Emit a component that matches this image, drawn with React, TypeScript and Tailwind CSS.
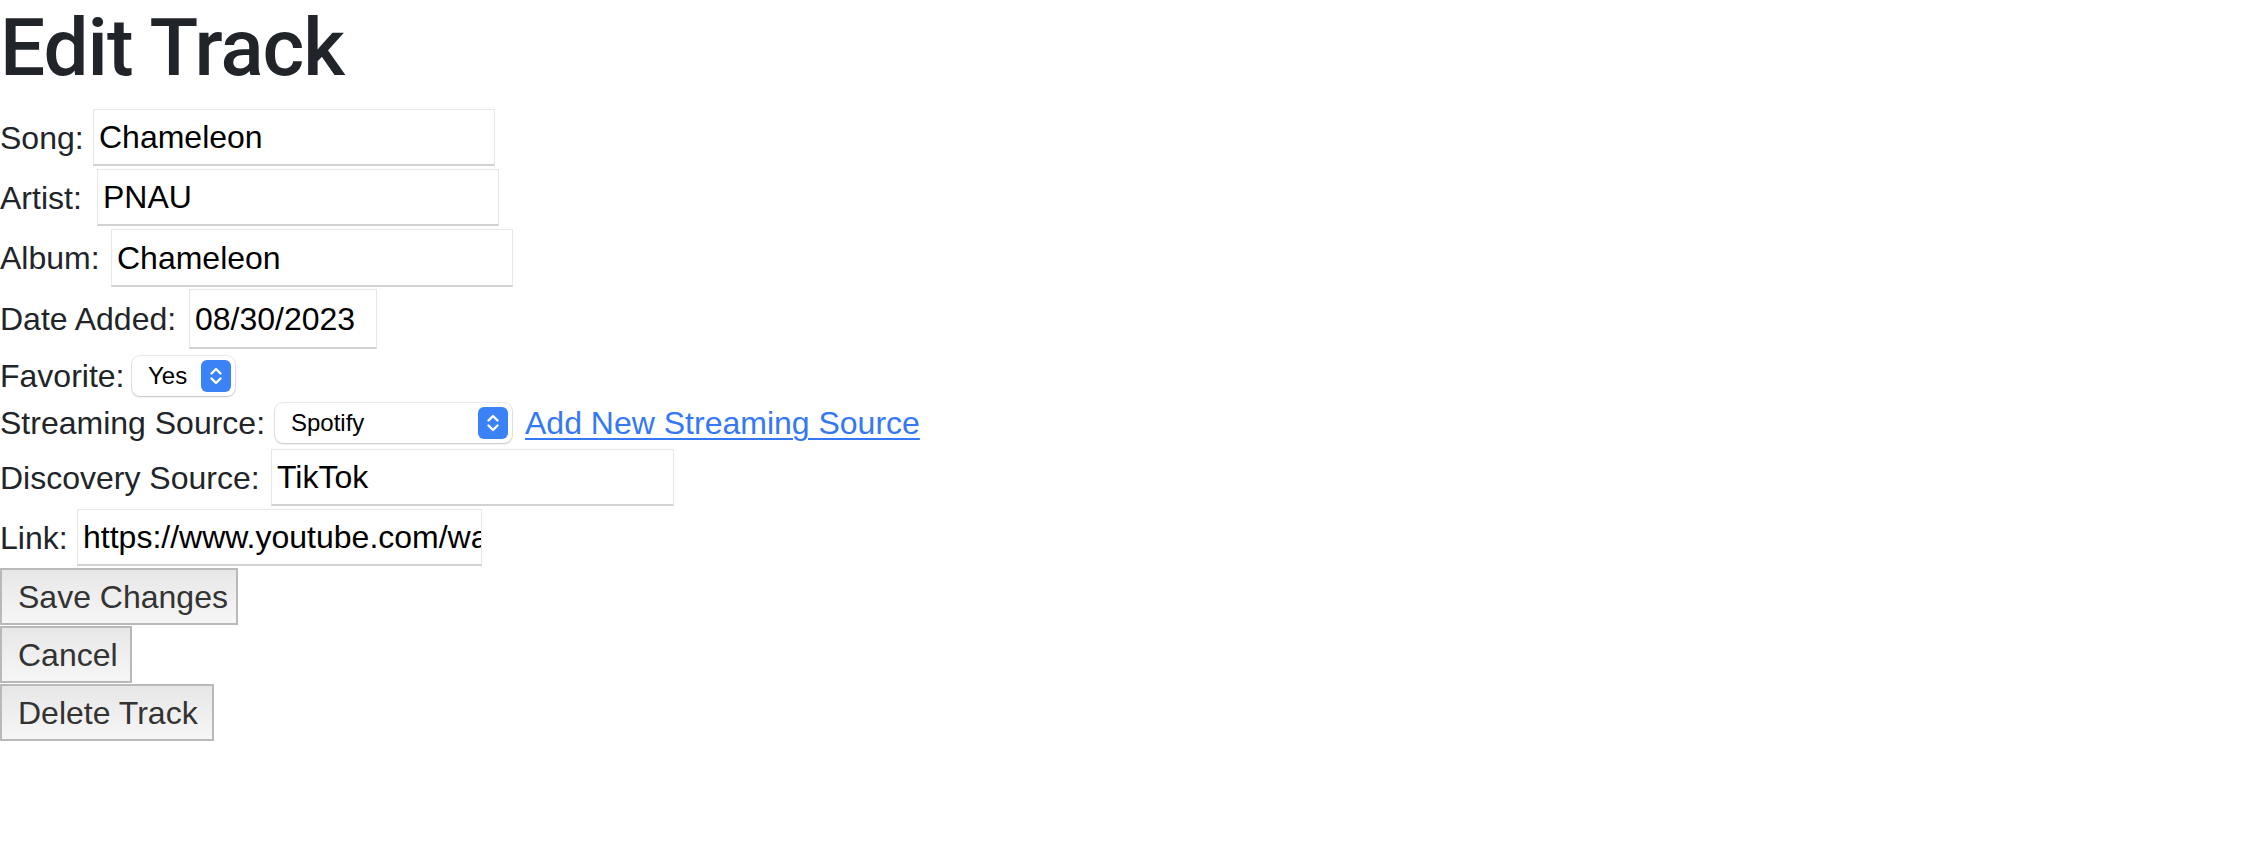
import React from "react";

const font = "font-['Liberation_Sans',Arial,sans-serif]";

function Chevrons() {
  return (
    <svg viewBox="0 0 16 24" className="h-[24px] w-[16px]" fill="none" stroke="white" strokeWidth="2.4" strokeLinecap="round" strokeLinejoin="round">
      <path d="M3.5 9.5 L8 5 L12.5 9.5" />
      <path d="M3.5 14.5 L8 19 L12.5 14.5" />
    </svg>
  );
}

function Select({ value, width }: { value: string; width: string }) {
  return (
    <div
      className={`flex h-[40px] items-center justify-between rounded-[8px] bg-white pl-[16px] pr-[4px] shadow-[0_0_0_1px_rgba(0,0,0,0.08),0_1px_2px_rgba(0,0,0,0.18)] ${width}`}
    >
      <span className="text-[24px] leading-none text-black">{value}</span>
      <span className="flex h-[32px] w-[30px] items-center justify-center rounded-[6px] bg-[#3b82f6]">
        <Chevrons />
      </span>
    </div>
  );
}

function TextInput({ value, width, height = "h-[57px]" }: { value: string; width: string; height?: string }) {
  return (
    <div
      className={`flex items-center overflow-hidden whitespace-nowrap border border-[#e8e8e8] border-b-[2px] border-b-[#d2d2d2] bg-white px-[5px] text-[32px] leading-none text-black ${width} ${height}`}
    >
      {value}
    </div>
  );
}

function Button({ label, width, mt }: { label: string; width: string; mt: string }) {
  return (
    <div
      className={`flex h-[57px] items-center border-2 border-[#b9b9b9] bg-gradient-to-b from-[#e7e7e7] to-[#f6f6f6] pl-[16px] text-[32px] leading-none text-[#333333] ${width} ${mt}`}
    >
      {label}
    </div>
  );
}

export default function App() {
  return (
    <div className={`min-h-[854px] w-[2248px] bg-white text-[#212529] ${font}`}>
      <h1 className="h-[96px] font-['Roboto',sans-serif] text-[80px] font-medium leading-[96px] tracking-[-1px] text-[#212529]">
        Edit Track
      </h1>

      <div className="flex flex-col text-[32px] leading-none">
        <div className="mt-[13px] flex h-[57px] items-center">
          <span className="w-[93px]">Song:</span>
          <TextInput value="Chameleon" width="w-[402px]" />
        </div>
        <div className="mt-[3px] flex h-[57px] items-center">
          <span className="w-[97px]">Artist:</span>
          <TextInput value="PNAU" width="w-[402px]" />
        </div>
        <div className="mt-[3px] flex h-[58px] items-center">
          <span className="w-[111px]">Album:</span>
          <TextInput value="Chameleon" width="w-[402px]" height="h-[58px]" />
        </div>
        <div className="mt-[2px] flex h-[60px] items-center">
          <span className="w-[189px]">Date Added:</span>
          <TextInput value="08/30/2023" width="w-[188px]" height="h-[60px]" />
        </div>
        <div className="mt-[7px] flex h-[40px] items-center">
          <span className="w-[132px]">Favorite:</span>
          <Select value="Yes" width="w-[103px]" />
        </div>
        <div className="mt-[7px] flex h-[40px] items-center">
          <span className="w-[275px]">Streaming Source:</span>
          <Select value="Spotify" width="w-[237px]" />
          <a href="#" className="ml-[13px] text-[#3478f6] underline decoration-[2px] underline-offset-[4px]">
            Add New Streaming Source
          </a>
        </div>
        <div className="mt-[6px] flex h-[57px] items-center">
          <span className="w-[271px]">Discovery Source:</span>
          <TextInput value="TikTok" width="w-[403px]" />
        </div>
        <div className="mt-[3px] flex h-[57px] items-center">
          <span className="w-[77px]">Link:</span>
          <TextInput value="https://www.youtube.com/watch?v=chameleon" width="w-[405px]" />
        </div>

        <Button label="Save Changes" width="w-[238px]" mt="mt-[2px]" />
        <Button label="Cancel" width="w-[132px]" mt="mt-[1px]" />
        <Button label="Delete Track" width="w-[214px]" mt="mt-[1px]" />
      </div>
    </div>
  );
}
